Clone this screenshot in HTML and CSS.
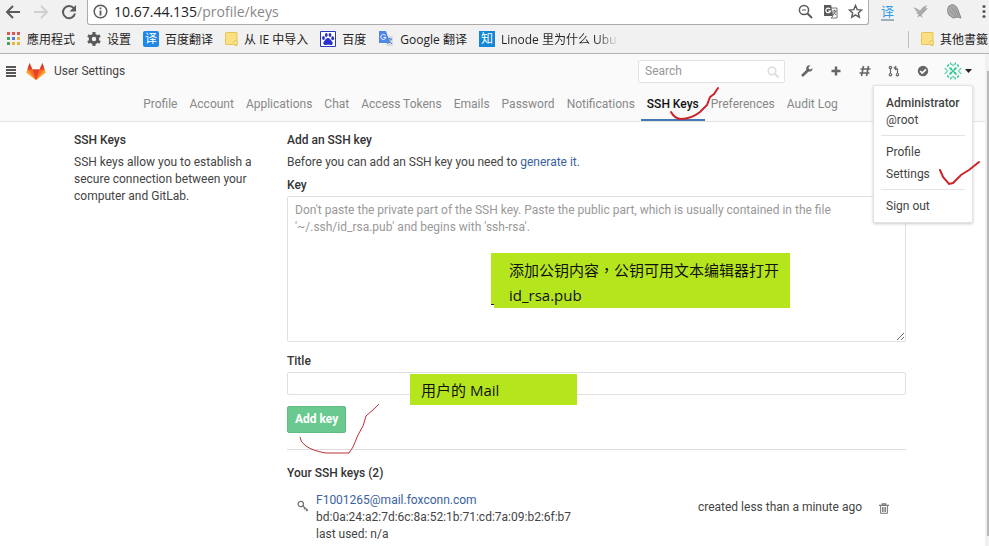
FILE: index.html
```html
<!DOCTYPE html>
<html lang="en">
<head>
<meta charset="utf-8">
<title>User Settings</title>
<link rel="stylesheet" href="styles.css">
</head>
<body>
<div class="browser">
  <div class="toolbar">
    <div class="nav-buttons">
      <button class="plain" aria-label="Back"><svg width="16" height="16" viewBox="0 0 16 16"><path d="M15 8H2M8 2L2 8l6 6" fill="none" stroke="#5a5a5a" stroke-width="2"/></svg></button>
      <button class="plain" aria-label="Forward"><svg width="16" height="16" viewBox="0 0 16 16"><path d="M1 8h13M8 2l6 6-6 6" fill="none" stroke="#d0d0d0" stroke-width="2"/></svg></button>
      <button class="plain" aria-label="Reload"><svg width="16" height="16" viewBox="0 0 16 16"><path d="M12.8 4.2A6.1 6.1 0 1 0 14 9.6" fill="none" stroke="#5a5a5a" stroke-width="2"/><path d="M15 1v6.5H8.5z" fill="#5a5a5a"/></svg></button>
    </div>
    <div class="address">
      <svg width="15" height="15" viewBox="0 0 15 15"><circle cx="7.500" cy="7.500" r="6.300" fill="none" stroke="#5a5a5a" stroke-width="1.500"/><path d="M7.500 6.500v5M7.500 3.500v1.800" stroke="#5a5a5a" stroke-width="1.800"/></svg>
      <span class="url">10.67.44.135<span class="path">/profile/keys</span></span>
      <svg width="15" height="15" viewBox="0 0 15 15"><circle cx="6" cy="6" r="4.600" fill="none" stroke="#5a5a5a" stroke-width="1.500"/><path d="M9.500 9.500L14 14" stroke="#5a5a5a" stroke-width="2"/><path d="M4 6h4" stroke="#5a5a5a"/></svg>
      <svg width="15" height="15" viewBox="0 0 15 15"><path d="M1 1h7l3 11H1z" fill="#5a5a5a"/><path d="M8 4h6v10H8l2-2z" fill="#fff" stroke="#777"/><path d="M9.500 7h4M11.500 5.800V7M10 11l3-4M10.500 8l2.500 3" stroke="#666" fill="none"/><path d="M7 5a2.300 2.300 0 1 0 .4 2H5.300" stroke="#fff" stroke-width="1.200" fill="none"/></svg>
      <svg width="15" height="15" viewBox="0 0 15 15"><path d="M7.500 1.500l1.700 4.100 4.500.4-3.400 2.900 1 4.400-3.800-2.400-3.800 2.400 1-4.400L1.300 6l4.500-.4z" fill="none" stroke="#5a5a5a" stroke-width="1.400"/></svg>
    </div>
    <div class="extensions">
      <span class="ext-yi">译</span>
      <svg width="15" height="15" viewBox="0 0 15 15"><path d="M0 3.500l3 .5 4 2.500L10 3l4-2-1.500 3.500L15 4l-3 3.500L9.500 10l-1 1 1.500 3-3-2-3 1.500 1.500-3L3 9l2-1-3-1.500 1-.5z" fill="#aaa"/></svg>
      <svg width="16" height="16" viewBox="0 0 16 16"><path d="M2 2c4-3 8 0 9 4l3 8-4-1-4 1-4-3c-2-3-2-6 0-9z" fill="#aaa" stroke="#888"/><path d="M4 3l7 10M3 7l6 6M7 3l5 9" stroke="#888" stroke-width=".6"/></svg>
      <svg width="4" height="15" viewBox="0 0 4 15"><g fill="#5a5a5a"><circle cx="2" cy="2.500" r="1.600"/><circle cx="2" cy="7.500" r="1.600"/><circle cx="2" cy="12.500" r="1.600"/></g></svg>
    </div>
  </div>
  <div class="bookmarks">
    <a href="#"><svg width="14" height="14" viewBox="0 0 14 14"><g fill="#e0584f"><path d="M0 0h3v3H0zM5 0h3v3H5zM10 0h3v3h-3z"/></g><path d="M0 5h3v3H0z" fill="#47a35b"/><path d="M5 5h3v3H5z" fill="#4a7fd8"/><path d="M10 5h3v3h-3z" fill="#e8b53c"/><path d="M0 10h3v3H0z" fill="#47a35b"/><path d="M5 10h3v3H5zM10 10h3v3h-3z" fill="#e8b53c"/></svg>應用程式</a>
    <a href="#"><svg width="14" height="14" viewBox="0 0 14 14"><circle cx="7" cy="7" r="3.700" fill="none" stroke="#5a5a5a" stroke-width="3"/><g stroke="#5a5a5a" stroke-width="3"><path d="M7 0v3M7 11v3M1 3.500L3.500 5M10.500 9L13 10.500M13 3.500L10.500 5M3.500 9L1 10.500"/></g></svg>设置</a>
    <a href="#"><span class="badge-yi">译</span>百度翻译</a>
    <a href="#"><svg width="13" height="14" viewBox="0 0 13 14"><path d="M1 .5h11v13H10l-1-1H.5V1z" fill="#fbe083" stroke="#e6c45a"/><path d="M9 12.500V9h3v4z" fill="#fff0b0" stroke="#e6c45a"/></svg>从 IE 中导入</a>
    <a href="#"><svg width="16" height="16" viewBox="0 0 16 16"><path d="M.5.500h15v15H.5z" fill="#fff" stroke="#2a35c0"/><g fill="#2932c8"><ellipse cx="3.500" cy="7" rx="1.400" ry="2"/><ellipse cx="6.300" cy="4" rx="1.400" ry="2"/><ellipse cx="10" cy="4" rx="1.400" ry="2"/><ellipse cx="12.700" cy="7.300" rx="1.400" ry="2"/><path d="M8 7c2 0 2.500 2 4 3.500s.5 4-1.500 3.500-3-.3-4.500 0-4-1-2-3.500S6 7 8 7z"/></g></svg>百度</a>
    <a href="#"><svg width="16" height="16" viewBox="0 0 16 16"><path d="M6 5h9v10H9z" fill="#d9dbe0"/><path d="M1 0h7l4 12H1z" fill="#4f87e8"/><path d="M7.500 4.700a2.500 2.500 0 1 0 .3 1.800H5.500" stroke="#fff" fill="none"/><path d="M9 8h5M11.500 7v1M9.500 13l4-5M10 9l4 4" stroke="#557ec5" fill="none"/></svg>Google 翻译</a>
    <a href="#" class="fade"><span class="badge-zhi">知</span>Linode 里为什么 Ubu</a>
    <a href="#" class="other"><svg width="13" height="14" viewBox="0 0 13 14"><path d="M1 .5h11v13H10l-1-1H.5V1z" fill="#fbe083" stroke="#e6c45a"/><path d="M9 12.500V9h3v4z" fill="#fff0b0" stroke="#e6c45a"/></svg>其他書籤</a>
  </div>
</div>

<div class="viewport">
  <div class="page">
    <header class="site-header">
      <div class="title-row">
        <button class="plain" aria-label="Menu"><svg width="10" height="12" viewBox="0 0 10 12"><path d="M0 2h10M0 5h10M0 8h10M0 11h10" stroke="#222" stroke-width="1.300"/></svg></button>
        <svg class="logo" width="20" height="18" viewBox="0 0 20 18"><path d="M10 18L.5 10.500 3.500 1l3 6.500h7l3-6.500 3 9.500z" fill="#fc6d26"/><path d="M10 18L6.500 7.500h7z" fill="#e24329"/><path d="M3.500 1l3 6.500H1.500zM16.500 1l-3 6.500h5z" fill="#d8402a"/><path d="M10 18L.5 10.500l1-3zM10 18l9.500-7.500-1-3z" fill="#fca326"/></svg>
        <h1>User Settings</h1>
        <div class="search">
          <input type="text" placeholder="Search" aria-label="Search">
          <svg width="12" height="12" viewBox="0 0 12 12"><circle cx="5" cy="5" r="3.800" fill="none" stroke="#ddd" stroke-width="1.600"/><path d="M8 8l3.500 3.500" stroke="#ddd" stroke-width="2"/></svg>
        </div>
        <nav class="icons">
          <a href="#" aria-label="Admin area"><svg width="12" height="12" viewBox="0 0 12 12"><path d="M1.800 10.300L7.200 5" stroke="#666" stroke-width="2.600" stroke-linecap="round"/><path d="M11.600 3.200A3.200 3.200 0 1 1 9.500.4L7.700 2v2l1.600.4z" fill="#666"/></svg></a>
          <a href="#" aria-label="New"><svg width="12" height="12" viewBox="0 0 12 12"><path d="M6 1.500v9M1.500 6h9" stroke="#666" stroke-width="2.500"/></svg></a>
          <a href="#" aria-label="Issues"><svg width="12" height="12" viewBox="0 0 12 12"><path d="M4.500 1l-2 10M9.500 1l-2 10M1.500 4h10M.5 8h10" stroke="#666" stroke-width="1.600"/></svg></a>
          <a href="#" aria-label="Merge requests"><svg width="12" height="12" viewBox="0 0 12 12"><g fill="none" stroke="#666" stroke-width="1.200"><circle cx="2.500" cy="2.500" r="1.200"/><circle cx="2.500" cy="9.700" r="1.200"/><circle cx="9.500" cy="9.700" r="1.200"/><path d="M2.500 4v4.500M9.500 8.500V4.500Q9.500 3 7 3M8.300 1L6.300 3l2 2"/></g></svg></a>
          <a href="#" aria-label="Todos"><svg width="12" height="12" viewBox="0 0 12 12"><circle cx="6" cy="6" r="5.200" fill="#666"/><path d="M3.200 6l2 2L9 4.300" fill="none" stroke="#fff" stroke-width="1.700"/></svg></a>
        </nav>
        <div class="account">
          <button class="plain avatar" aria-label="Account"><svg width="18" height="18" viewBox="0 0 18 18"><circle cx="9" cy="9" r="8.500" fill="#effaf6"/><g fill="#43c99e"><path d="M5 5l3 1v1.500h2V6l3-1-1 3h-1.500v2H12l1 3-3-1v-1.500H8V12l-3 1 1-3h1.500V8H6z"/><path d="M6 0l3 3 3-3v2L9 4 6 2zM6 18l3-3 3 3v-2l-3-2-3 2zM0 6l3 3-3 3h1.500L4 9 1.500 6zM18 6l-3 3 3 3h-1.500L14 9l2.500-3zM3 3l2-1v2L3 5zM15 3l-2-1v2l2 1zM3 15l2 1v-2l-2-1zM15 15l-2 1v-2l2-1z"/></g></svg><svg width="7" height="4" viewBox="0 0 7 4"><path d="M0 0h7L3.500 4z" fill="#222"/></svg></button>
          <ul class="dropdown">
            <li class="who"><strong>Administrator</strong>@root</li>
            <li class="group"><a href="#">Profile</a><a href="#">Settings</a></li>
            <li class="group"><a href="#">Sign out</a></li>
          </ul>
          <svg class="mark mark-settings" width="44" height="28" viewBox="0 0 44 28"><path d="M1 10l3 7 6 7 4-1 8-8 8-5 10-8" fill="none" stroke="#c9252b" stroke-width="2" stroke-linecap="round"/></svg>
        </div>
      </div>
      <nav class="tabs">
        <a href="#">Profile</a><a href="#">Account</a><a href="#">Applications</a><a href="#">Chat</a><a href="#">Access Tokens</a><a href="#">Emails</a><a href="#">Password</a><a href="#">Notifications</a><a href="#" class="active">SSH Keys<svg class="mark mark-tab" width="52" height="36" viewBox="0 0 52 36"><path d="M2 26q4 7 10 7 10 0 19-7l7-7 3-8 4-3 4-6" fill="none" stroke="#cc2229" stroke-width="2" stroke-linecap="round"/></svg></a><a href="#">Preferences</a><a href="#">Audit Log</a>
      </nav>
    </header>

    <main>
      <section class="intro">
        <h4>SSH Keys</h4>
        <p>SSH keys allow you to establish a secure connection between your computer and GitLab.</p>
      </section>
      <section class="content">
        <h4>Add an SSH key</h4>
        <p>Before you can add an SSH key you need to <a href="#">generate it.</a></p>
        <form>
          <div class="field">
            <label for="key">Key</label>
            <textarea id="key" placeholder="Don't paste the private part of the SSH key. Paste the public part, which is usually contained in the file '~/.ssh/id_rsa.pub' and begins with 'ssh-rsa'."></textarea>
            <div class="note note-key">添加公钥内容<span lang="zh-TW">，</span>公钥可用文本编辑器打开<br>id_rsa.pub</div>
          </div>
          <div class="field">
            <label for="title">Title</label>
            <input type="text" id="title">
            <div class="note note-title">用户的 Mail</div>
          </div>
          <div class="actions">
            <button type="button" class="add">Add key</button>
            <svg class="mark mark-add" width="82" height="54" viewBox="0 0 82 54"><path d="M1 35q0 5 6 9 7 5 20 7h23l4-6 5-12 5-9 3-10 9-8 4-4" fill="none" stroke="#c03038"/></svg>
          </div>
        </form>
        <hr>
        <h4>Your SSH keys (2)</h4>
        <ul class="keys">
          <li>
            <svg width="12" height="12" viewBox="0 0 12 12"><circle cx="3.800" cy="4" r="2.700" fill="none" stroke="#777" stroke-width="1.300"/><path d="M5.800 6l5.200 4.500M8 8l-1 1.500M10 9.600L9 11" fill="none" stroke="#777" stroke-width="1.300"/></svg>
            <div class="key-info"><a href="#">F1001265@mail.foxconn.com</a><span>bd:0a:24:a2:7d:6c:8a:52:1b:71:cd:7a:09:b2:6f:b7</span><span>last used: n/a</span></div>
            <span class="created">created less than a minute ago</span>
            <button class="plain" aria-label="Remove"><svg width="10" height="11" viewBox="0 0 10 11"><path d="M0 2.300h10M3.300 2V.8h3.400V2" fill="none" stroke="#777" stroke-width="1.200"/><path d="M1.600 3v7.300h6.800V3M3.600 4v5M5 4v5M6.400 4v5" fill="none" stroke="#777"/></svg></button>
          </li>
        </ul>
      </section>
    </main>
  </div>
  <div class="scrollbar"><div class="thumb"></div></div>
</div>
</body>
</html>
```
FILE: styles.css
```css
* { box-sizing: border-box; }
body {
  margin: 0;
  height: 100vh;
  overflow: hidden;
  display: flex;
  flex-direction: column;
  background: #fff;
  color: #444;
  font: 12px/17px Roboto, "Noto Sans CJK SC", sans-serif;
}
h1, h4, p, ul { margin: 0; padding: 0; font-size: 12px; font-weight: 400; }
ul { list-style: none; }
a { color: #3a62a0; text-decoration: none; }
svg { display: block; flex: none; }
input, textarea, button { font: inherit; color: inherit; }
.plain { display: flex; align-items: center; border: 0; padding: 0; background: none; }
.mark { position: absolute; pointer-events: none; z-index: 5; }

/* browser frame */
.browser { flex: none; background: #f1f1f1; border-bottom: 1px solid #b2b2b2; color: #222; font-family: "Open Sans", "Noto Sans CJK SC", sans-serif; }
.toolbar { display: flex; height: 25px; }
.nav-buttons { display: flex; align-items: center; gap: 12px; padding: 0 10px 2px 5px; }
.address {
  flex: 1;
  display: flex;
  align-items: center;
  gap: 10px;
  padding: 0 5px 2px;
  background: #fff;
  border: 1px solid #aaa;
  border-top: 0;
  border-radius: 0 0 3px 3px;
}
.url { flex: 1; margin-left: -4px; font-size: 14px; }
.path { color: #888; }
.extensions { display: flex; align-items: center; gap: 19px; padding: 0 3px 2px 12px; }
.ext-yi { color: #2e9be6; font-size: 13px; line-height: 16px; border-bottom: 2px solid #9bb0bd; }
.bookmarks { display: flex; align-items: center; height: 28px; padding-left: 7px; gap: 12px; }
.bookmarks a { display: flex; align-items: center; gap: 6px; color: #222; white-space: nowrap; }
.badge-yi, .badge-zhi { width: 16px; height: 16px; line-height: 16px; text-align: center; background: #1e87e8; color: #fff; border-radius: 2px; }
.badge-zhi { border-radius: 0; background: #1287d8; }
.bookmarks .fade { color: transparent; background: linear-gradient(to right, #222 85%, #ddd) text; }
.fade .badge-zhi { color: #fff; }
.bookmarks .other { margin-left: auto; padding: 0 1px 0 12px; border-left: 1px solid #c0c0c0; }

/* page */
.viewport { flex: 1; display: flex; min-height: 0; }
.page { flex: 1; min-width: 0; }
.scrollbar { width: 4px; background: #f1f1f1; padding: 17px 0 10px 2px; }
.thumb { height: 100%; background: #b8b8b8; }
.site-header { background: #fafafa; border-bottom: 1px solid #e3e3e3; }
.title-row { display: flex; align-items: center; height: 34px; padding: 0 13px 0 6px; }
.logo { margin: 0 8px 0 10px; }
.title-row h1 { flex: 1; }
.search { position: relative; width: 147px; }
.search input { display: block; width: 100%; height: 23px; padding: 0 6px; border: 1px solid #e3e3e3; border-radius: 2px; background: #fff; }
.search svg { position: absolute; right: 6px; top: 6px; }
::placeholder { color: #999; opacity: 1; }
.icons { display: flex; gap: 17px; margin: 0 15px 0 16px; }
.account { position: relative; }
.avatar { gap: 3px; }
.dropdown {
  position: absolute;
  right: -1px;
  top: 23px;
  z-index: 4;
  width: 100px;
  padding: 9px 7px 1px;
  background: #fff;
  border: 1px solid #e3e3e3;
  border-radius: 2px;
  box-shadow: 0 1px 3px #ccc;
}
.dropdown li { padding: 0 5px; }
.dropdown strong { display: block; font-weight: 500; }
.dropdown .who { padding-bottom: 6px; }
.dropdown .group { border-top: 1px solid #e3e3e3; padding-top: 5px; padding-bottom: 4px; }
.dropdown a { display: block; color: #444; line-height: 22px; }
.mark-settings { left: -5px; top: 98px; }
.tabs { display: flex; justify-content: center; height: 33px; padding-right: 4px; }
.tabs a { position: relative; padding: 8px 6px 0; color: #888; white-space: nowrap; }
.tabs .active { color: #111; font-weight: 500; border-bottom: 2px solid #4478b4; }
.mark-tab { left: 28px; top: -2px; }

main { display: grid; grid-template-columns: 183px 1fr; gap: 30px; padding: 10px 79px 0 74px; }
h4 { margin-bottom: 5px; color: #333; font-weight: 500; }
.content > p { margin-bottom: 6px; }
.field { position: relative; margin-bottom: 11px; }
label { display: block; margin-bottom: 2px; color: #333; font-weight: 500; }
textarea, .field input { display: block; width: 100%; border: 1px solid #e0e0e0; border-radius: 2px; background: #fff; }
textarea { height: 146px; padding: 5px 7px; }
.field input { height: 23px; padding: 0 7px; }
.note { position: absolute; background: #b5e61d; color: #111; font-family: "Open Sans", "Noto Sans CJK SC", sans-serif; font-size: 15px; line-height: 25px; white-space: nowrap; }
.note-key { left: 204px; top: 76px; padding: 5px 11px 0 18px; height: 55px; }
.note-key::after { content: ""; position: absolute; left: 0; bottom: 0; width: 3px; height: 3px; background: #fff; border-top: 1px solid #222; }
.note-title { left: 123px; top: 21px; width: 167px; padding: 4px 11px 2px; }
.actions { position: relative; }
.add { display: block; height: 27px; padding: 0 7px; border: 1px solid #5dbb83; border-radius: 2px; background: #69c98f; color: #fff; font-weight: 700; }
.mark-add { left: 12px; top: -4px; }
hr { height: 1px; margin: 16px 0 15px; border: 0; background: #ddd; }
.keys { margin-top: 10px; }
.keys li { display: flex; align-items: flex-start; padding: 0 17px 0 10px; }
.keys svg { margin-top: 8px; }
.key-info { display: flex; flex-direction: column; flex: 1; margin-left: 7px; }
.created { margin: 7px 17px 0 0; }
.keys .plain { margin-top: 3px; }
```
